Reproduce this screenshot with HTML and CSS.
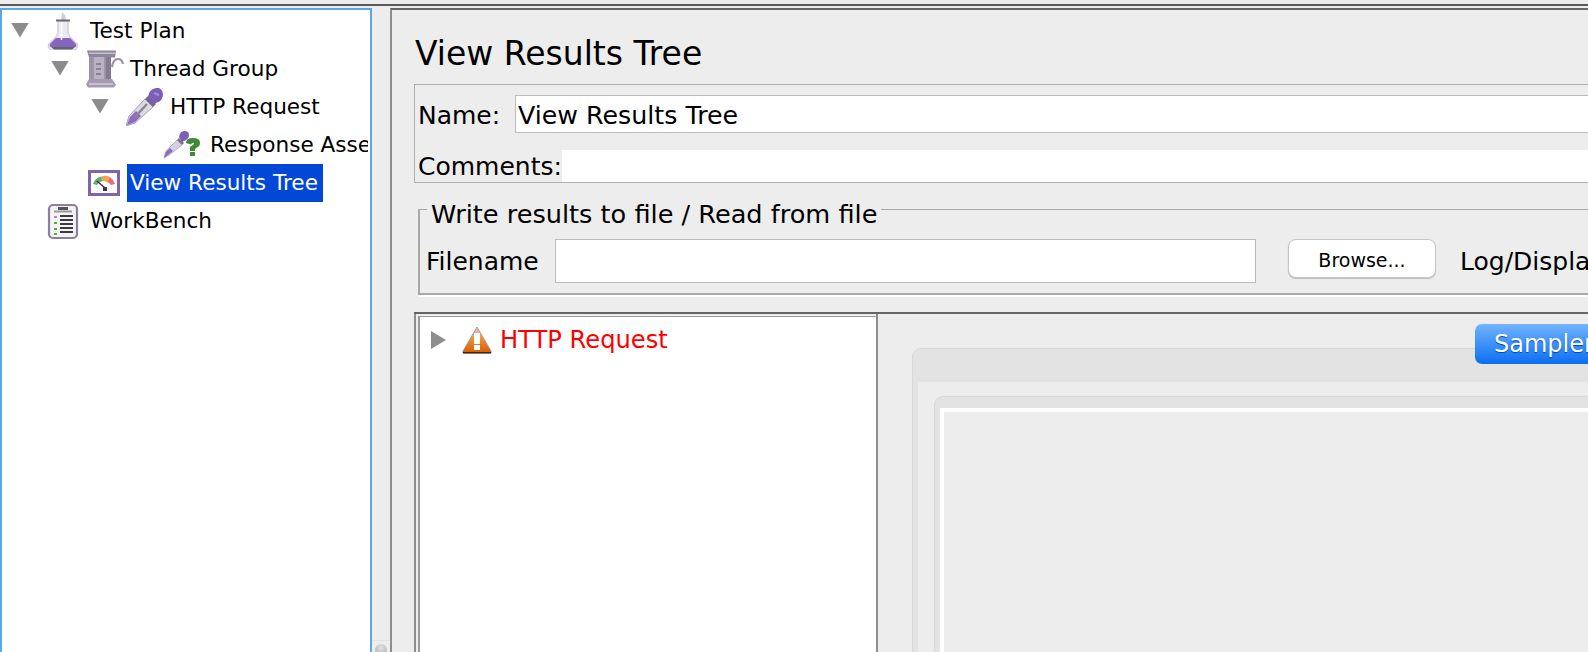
FILE: index.html
```html
<!DOCTYPE html>
<html lang="en">
<head>
<meta charset="utf-8">
<title>View Results Tree</title>
<link rel="stylesheet" href="styles.css">
</head>
<body>
<div class="topline"></div>
<div class="split">
  <nav class="tree-pane">
    <div class="row l0">
      <span class="twist down"></span>
      <span class="icon">
        <svg width="38" height="38" viewBox="0 0 38 38">
          <path d="M16 0l3 3 1 5h-5z" fill="#cfccd4"/>
          <path d="M12 9h10v9q0 4 2 7l7 7q2 4-3 6H6q-5-2-3-6l7-7q2-3 2-7z" fill="#eceaf0" stroke="#d5d0de" stroke-width="1.500"/>
          <path d="M10 8.500h14" stroke="#6d6a72" stroke-width="2"/>
          <path d="M10 26h14l6 6q1 3-1 3H5q-2 0-1-3z" fill="#8565bd"/>
          <path d="M5 35h24l-3 2.500H8z" fill="#66636c"/>
          <path d="M15.500 10v18" stroke="#fff" stroke-width="1.500"/>
        </svg>
      </span>
      <span class="label">Test Plan</span>
    </div>
    <div class="row l1">
      <span class="twist down"></span>
      <span class="icon">
        <svg width="38" height="38" viewBox="0 0 38 38">
          <path d="M1 0.500h29l-1 7H3z" fill="#8f859b"/>
          <path d="M3 2.500h26v1.500H3z" fill="#c5bfcd"/>
          <path d="M3 7h22v24H3z" fill="#9d94a8"/>
          <path d="M8 7h10v24H8z" fill="#b9b2c2"/>
          <path d="M20 7h5v24h-5z" fill="#847a91"/>
          <path d="M10 14h5M10 19h5M10 24h5" stroke="#7c7289" stroke-width="1.500"/>
          <path d="M26 17q1-8 6-8 4 0 5 5" fill="none" stroke="#9a90a6" stroke-width="2.200"/>
          <path d="M3 29h23l4 6-2 2.500H2l-2-3z" fill="#a59bb1"/>
          <path d="M3 34h24" stroke="#d3cedb" stroke-width="1.500"/>
        </svg>
      </span>
      <span class="label">Thread Group</span>
    </div>
    <div class="row l2">
      <span class="twist down"></span>
      <span class="icon">
        <svg width="38" height="38" viewBox="0 0 38 38">
          <path d="M0 38l3-10L19 11l8 8L9 35z" fill="#dcd9e2" stroke="#a99dc4" stroke-width="1"/>
          <path d="M1 37l3-8 6-6 5 5-6 6z" fill="#8b6cc4"/>
          <path d="M8 30l13-14" stroke="#8a8593" stroke-width="2.500"/>
          <path d="M19 11l8 8 3-3-8-8z" fill="#6f6a78"/>
          <path d="M22 9q1-8 8-9 6-1 7 6 0 7-7 9l-3 2z" fill="#7d5db8"/>
          <path d="M28 5l5 2" stroke="#a78fd4" stroke-width="2"/>
        </svg>
      </span>
      <span class="label">HTTP Request</span>
    </div>
    <div class="row l3">
      <span class="twist down hidden"></span>
      <span class="icon">
        <svg class="over" width="38" height="38" viewBox="0 0 38 38">
          <path d="M-2 32l2-7L11 14l5 5L3 29z" fill="#d5d2dc" stroke="#a79bc2" stroke-width=".8"/>
          <path d="M-2 32l2-6 4-4 3 3z" fill="#8b6cc4"/>
          <path d="M11 14l5 5 2-2-5-5z" fill="#79747f"/>
          <path d="M13 11q1-6 5-6 5 0 5 4 0 4-5 6l-2 1z" fill="#7d5db8"/>
          <path d="M20 17q0-5 7-5 7 0 7 5 0 3-3 4.500l-2 1.500v2h-5v-4l4-3q.5-1-1-1-2 0-2 1.500z" fill="#3f8a35"/>
          <rect x="24" y="26" width="5" height="4" fill="#3f8a35"/>
        </svg>
      </span>
      <span class="label">Response Assertion</span>
    </div>
    <div class="row l1">
      <span class="twist down hidden"></span>
      <span class="icon">
        <svg width="38" height="38" viewBox="0 0 38 38">
          <rect x="3.500" y="7.500" width="29" height="23" fill="#fff" stroke="#7e67a8" stroke-width="3"/>
          <path d="M7 20q2-6 8-7.500l2 4.500q-4 .5-6 4z" fill="#62ad68"/>
          <path d="M15 12.500q5-1.500 9 .5l-3 5q-2-1-4-1z" fill="#eda552"/>
          <path d="M24 13q3 2 5 7l-4 1q-1-2-4-3z" fill="#ea6f6a"/>
          <path d="M11 17l8 7" stroke="#3c3a40" stroke-width="1.600"/>
          <rect x="17" y="23" width="4" height="4" fill="#3c3a40"/>
        </svg>
      </span>
      <span class="label selected">View Results Tree</span>
    </div>
    <div class="row l0">
      <span class="twist down hidden"></span>
      <span class="icon">
        <svg width="38" height="38" viewBox="0 0 38 38">
          <rect x="3" y="3" width="28" height="33" rx="4" fill="#f4f3f6" stroke="#8b8099" stroke-width="2.200"/>
          <path d="M12 5h10v3H12z" fill="#55525a"/>
          <path d="M8 9.500h18" stroke="#9a97a0" stroke-width="2"/>
          <path d="M14 14h13M14 18h13M14 22h13M14 26h13M14 30h13" stroke="#3d3b42" stroke-width="2"/>
          <path d="M8 21h3M8 27h3M8 32h3" stroke="#58b030" stroke-width="2"/>
          <path d="M8 15h3" stroke="#9a97a0" stroke-width="2"/>
        </svg>
      </span>
      <span class="label">WorkBench</span>
    </div>
  </nav>
  <div class="divider">
    <div class="thumb"><span class="ball"></span></div>
  </div>
  <main class="main">
    <div class="content">
      <h1 class="title">View Results Tree</h1>
      <section class="names">
        <div class="name-row">
          <label class="lbl name-lbl">Name:</label>
          <input class="field name-input" value="View Results Tree">
        </div>
        <div class="comment-row">
          <label class="lbl comment-lbl">Comments:</label>
          <div class="comment-area"></div>
        </div>
      </section>
      <section class="fileset">
        <span class="legend">Write results to file / Read from file</span>
        <div class="file-row">
          <label class="lbl file-lbl">Filename</label>
          <input class="field file-input">
          <button class="browse">Browse...</button>
          <span class="lbl log-lbl">Log/Display Only:</span>
        </div>
      </section>
      <section class="results">
        <div class="result-tree">
          <div class="result-inner">
            <div class="result-row">
              <span class="twist right"></span>
              <svg class="warn" width="30" height="28" viewBox="0 0 30 28">
                <defs>
                  <linearGradient id="wg" x1="0" y1="0" x2="0" y2="1">
                    <stop offset="0" stop-color="#e9c9b0"/>
                    <stop offset=".5" stop-color="#ef8a30"/>
                    <stop offset="1" stop-color="#d85c00"/>
                  </linearGradient>
                </defs>
                <path d="M15 1L29 25q1 2-1 2H2q-2 0-1-2z" fill="url(#wg)" stroke="#8c8fa8" stroke-width=".8"/>
                <path d="M1 26h28v1.500H1z" fill="#3f2410"/>
                <rect x="12" y="7" width="6" height="11" fill="#fff"/>
                <rect x="12" y="19" width="6" height="5" fill="#fff"/>
              </svg>
              <span class="result-text">HTTP Request</span>
            </div>
          </div>
        </div>
        <div class="result-view">
          <div class="tabs"><button class="tab">Sampler result</button></div>
          <div class="tabpane">
            <div class="tabbody">
              <div class="subpane">
                <div class="subbody"></div>
              </div>
            </div>
          </div>
        </div>
      </section>
    </div>
  </main>
</div>
</body>
</html>
```

FILE: styles.css
```css
* { box-sizing: border-box; }
html, body { margin: 0; padding: 0; }
body {
  width: 1588px;
  height: 652px;
  overflow: hidden;
  background: #ededed;
  color: #000;
  font-family: "DejaVu Sans", sans-serif;
  padding-top: 4px;
}
.topline { height: 2px; background: #5a5a5a; }
.split { display: flex; height: 644px; margin-top: 2px; }

/* left tree */
.tree-pane {
  width: 372px;
  flex: none;
  background: #fff;
  border: 2px solid #5aa9e6;
  border-bottom: 0;
  padding-top: 2px;
  overflow: hidden;
  font-size: 21.600px;
}
.row { display: flex; align-items: center; width: 366px; height: 38px; white-space: nowrap; overflow: hidden; }
.l0 { padding-left: 9px; }
.l1 { padding-left: 49px; }
.l2 { padding-left: 89px; }
.l3 { padding-left: 129px; }
.twist { display: block; flex: none; width: 18px; height: 15px; margin-right: 17px; margin-bottom: 2px; }
.twist.down { background: #8c8c8c; clip-path: polygon(0 0, 100% 0, 50% 100%); }
.twist.hidden { visibility: hidden; }
.twist.right { background: #8c8c8c; width: 15px; height: 18px; margin: 0; clip-path: polygon(0 0, 100% 50%, 0 100%); }
.icon { flex: none; width: 38px; height: 38px; margin-right: 3px; }
.icon svg { display: block; }
.icon svg.over { overflow: visible; }
.label { display: block; height: 38px; line-height: 38px; padding: 0 5px 0 3px; }
.label.selected { background: #0048d5; color: #fff; }

/* divider */
.divider { width: 18px; flex: none; display: flex; flex-direction: column; justify-content: flex-end; }
.thumb { height: 12px; border-top: 1px solid #e2e2e2; padding: 3px 3px 0; overflow: hidden; }
.ball { display: block; width: 12px; height: 12px; border-radius: 50%; background: radial-gradient(circle at 50% 30%, #e2e2e2, #a8a8a8); }

/* main */
.main {
  flex: 1;
  min-width: 0;
  border-top: 2px solid #666;
  border-left: 2px solid #8e8e8e;
  overflow: hidden;
}
.content { width: 1400px; padding-left: 22px; }
.title {
  margin: 0;
  height: 74px;
  padding: 24px 0 0 1px;
  font-size: 33px;
  font-weight: 400;
  line-height: 40px;
}
.lbl { font-size: 25px; white-space: nowrap; }
.names {
  height: 99px;
  border-top: 1px solid #b0b0b0;
  border-left: 1px solid #b0b0b0;
  border-bottom: 1px solid #b0b0b0;
  padding: 10px 0 0 3px;
}
.name-row { display: flex; align-items: center; height: 38px; }
.name-lbl { width: 97px; flex: none; padding-top: 2px; }
.field {
  display: block;
  border: 1px solid #bbb;
  background: #fff;
  font: 25.300px "DejaVu Sans", sans-serif;
  color: #000;
  padding: 2px 2px 0;
  outline: 0;
  border-radius: 0;
}
.name-input { flex: 1; height: 38px; }
.comment-row { display: flex; margin-top: 17px; height: 32px; align-items: center; }
.comment-lbl { width: 144px; flex: none; }
.comment-area { flex: 1; height: 32px; background: #fff; }

.fileset {
  position: relative;
  height: 86px;
  margin: 26px 0 0 4px;
  border-top: 1px solid #a8a8a8;
  border-left: 2px solid #a8a8a8;
  border-bottom: 2px solid #a8a8a8;
  box-shadow: 0 2px 0 #fff;
  padding: 29px 0 0 6px;
}
.legend {
  position: absolute;
  left: 7px;
  top: -12px;
  background: #ededed;
  padding: 0 4px;
  font-size: 25.600px;
  line-height: 32px;
  white-space: nowrap;
}
.file-row { display: flex; align-items: flex-start; }
.file-lbl { width: 129px; flex: none; line-height: 46px; }
.file-input { width: 701px; height: 44px; flex: none; }
.browse {
  width: 148px;
  height: 39px;
  flex: none;
  margin-left: 32px;
  background: #fff;
  border: 1px solid #c6c6c6;
  border-radius: 8px;
  box-shadow: 0 1px 1px #bdbdbd;
  font: 19px "DejaVu Sans", sans-serif;
  color: #000;
  padding: 2px 0 0;
}
.log-lbl { margin-left: 24px; line-height: 46px; }

/* results */
.results {
  display: flex;
  height: 340px;
  margin-top: 17px;
  border-top: 2px solid #666;
}
.result-tree {
  width: 464px;
  flex: none;
  border-left: 2px solid #8e8e8e;
  border-right: 2px solid #8e8e8e;
  padding: 2px 0 0 2px;
}
.result-inner {
  height: 100%;
  background: #fff;
  border-top: 1px solid #9a9a9a;
  border-left: 2px solid #9a9a9a;
  padding: 9px 0 0 11px;
}
.result-row { display: flex; align-items: center; height: 28px; }
.warn { flex: none; margin-left: 16px; }
.result-text { color: #f00; font-size: 24.200px; margin-left: 8px; white-space: nowrap; }
.result-view { flex: 1; min-width: 0; padding: 10px 0 0 34px; }
.tabs { position: relative; z-index: 1; height: 40px; padding-left: 563px; }
.tab {
  display: block;
  width: 240px;
  height: 40px;
  border: 0;
  border-radius: 7px;
  background: linear-gradient(#72b4ff, #0a6ff2);
  color: #fff;
  font: 24px "DejaVu Sans", sans-serif;
  text-align: left;
  padding: 0 0 0 19px;
  text-shadow: 0 1px 1px #0047a8;
}
.tabpane {
  margin-top: -16px;
  height: 320px;
  background: #e3e3e3;
  border: 1px solid #d8d8d8;
  border-bottom: 0;
  border-radius: 9px 9px 0 0;
  padding: 33px 0 0 5px;
}
.tabbody { height: 100%; background: #ededed; padding: 14px 0 0 16px; }
.subpane {
  height: 100%;
  background: #e3e3e3;
  border: 1px solid #d8d8d8;
  border-bottom: 0;
  border-radius: 9px 9px 0 0;
  padding: 11px 0 0 5px;
}
.subbody { height: 100%; background: #ededed; border-top: 4px solid #fff; border-left: 4px solid #fff; }
```
